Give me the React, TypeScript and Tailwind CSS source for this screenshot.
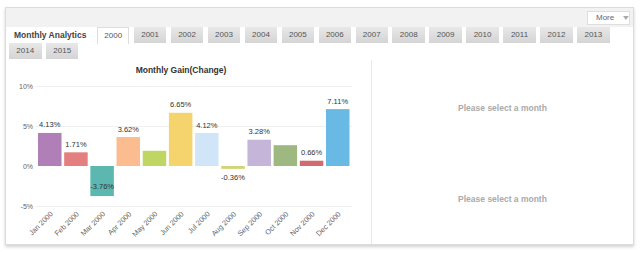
import React from "react";

const years = [
  "2000", "2001", "2002", "2003", "2004", "2005", "2006", "2007",
  "2008", "2009", "2010", "2011", "2012", "2013", "2014", "2015",
];

const months = [
  { name: "Jan", value: 4.13, color: "#b07fb7", label: true },
  { name: "Feb", value: 1.71, color: "#e37f7f", label: true },
  { name: "Mar", value: -3.76, color: "#5db7b1", label: true },
  { name: "Apr", value: 3.62, color: "#fbbd8f", label: true },
  { name: "May", value: 1.9, color: "#bfd762", label: false },
  { name: "Jun", value: 6.65, color: "#f5d46e", label: true },
  { name: "Jul", value: 4.12, color: "#d0e6f8", label: true },
  { name: "Aug", value: -0.36, color: "#d3d37c", label: true },
  { name: "Sep", value: 3.28, color: "#c5b5d8", label: true },
  { name: "Oct", value: 2.6, color: "#9db880", label: false },
  { name: "Nov", value: 0.66, color: "#d06b72", label: true },
  { name: "Dec", value: 7.11, color: "#68b9e4", label: true },
];

const ZERO = 166;
const PX_PER_PCT = 8;

function GainChart() {
  return (
    <svg width="366" height="184" className="block">
      <g transform="translate(-6,-60)" fontFamily="'Liberation Sans', Arial, sans-serif">
        <text x="181" y="73" textAnchor="middle" fontSize="8.5" fontWeight="bold" fill="#333">
          Monthly Gain(Change)
        </text>

        {/* grid */}
        {[86, 126, 206].map((y) => (
          <line key={y} x1="36" x2="352" y1={y + 0.5} y2={y + 0.5} stroke="#efefef" strokeWidth="1" />
        ))}
        {[
          { t: "10%", y: 89 },
          { t: "5%", y: 129 },
          { t: "0%", y: 169 },
          { t: "-5%", y: 209 },
        ].map((l) => (
          <text key={l.t} x="33" y={l.y} textAnchor="end" fontSize="7" fill="#666">
            {l.t}
          </text>
        ))}

        {/* bars */}
        {months.map((m, i) => {
          const x = 38 + i * 26.18;
          const h = Math.abs(m.value) * PX_PER_PCT;
          const y = m.value >= 0 ? ZERO - h : ZERO;
          const cx = x + 11.75;
          let ly = m.value >= 0 ? y - 5.5 : ZERO + h + 11;
          if (m.value < -3) ly = 189;
          return (
            <g key={m.name}>
              <rect x={x} y={y} width="23.5" height={h} fill={m.color} />
              {m.label && (
                <text x={cx} y={ly} textAnchor="middle" fontSize="7.5" fill="#333">
                  {m.value.toFixed(2)}%
                </text>
              )}
              <text
                x={cx + 3.5}
                y="214.5"
                textAnchor="end"
                fontSize="7.3"
                fill="#666"
                transform={`rotate(-45 ${cx + 3.5} 214.5)`}
              >
                {m.name} 2000
              </text>
            </g>
          );
        })}
      </g>
    </svg>
  );
}

export default function App() {
  return (
    <div className="w-[640px] h-[253px] bg-white pt-[7px] pl-[5px]" style={{ fontFamily: "'Liberation Sans', Arial, sans-serif" }}>
      <div className="w-[629px] h-[238px] border border-[#dcdcdc] bg-white shadow-[0_2px_3px_rgba(0,0,0,0.18)] flex flex-col">
        {/* header band */}
        <div className="h-[19px] bg-[#f2f2f2] flex items-center justify-end pr-[3px]">
          <div className="h-[14px] w-[43px] bg-white border border-[#dedede] flex items-center pl-[8px] gap-[9px] text-[8px] text-[#666]">
            <span>More</span>
            <svg width="6" height="4" viewBox="0 0 6 4">
              <path d="M0 0 L6 0 L3 4 Z" fill="#aaa" />
            </svg>
          </div>
        </div>

        {/* tabs */}
        <div className="flex flex-wrap gap-x-[4.45px] pl-[3px] w-[620px]">
          <div className="w-[83.5px] h-[16px] pl-[5px] flex items-center text-[8.5px] font-bold text-[#444]">
            Monthly Analytics
          </div>
          {years.map((y) =>
            y === "2000" ? (
              <div
                key={y}
                className="w-[32.5px] h-[17px] -mb-px flex items-center justify-center bg-white border-t border-l border-r border-[#dddddd] text-[8px] text-[#555]"
              >
                {y}
              </div>
            ) : (
              <div
                key={y}
                className="w-[32.5px] h-[16px] flex items-center justify-center bg-linear-to-b from-[#e8e8e8] to-[#d4d4d4] text-[8px] text-[#555]"
              >
                {y}
              </div>
            )
          )}
        </div>

        {/* content */}
        <div className="flex flex-1 mt-px">
          <div className="w-[366px] border-r border-[#e8e8e8]">
            <GainChart />
          </div>
          <div className="flex-1 flex flex-col">
            <div className="flex-1 flex items-center justify-center text-[8.5px] font-bold text-[#aaa] pt-[4px]">
              Please select a month
            </div>
            <div className="flex-1 flex items-center justify-center text-[8.5px] font-bold text-[#aaa] pt-[3px]">
              Please select a month
            </div>
          </div>
        </div>
      </div>
    </div>
  );
}
